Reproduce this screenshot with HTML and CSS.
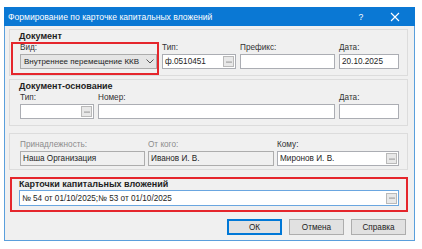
FILE: index.html
```html
<!DOCTYPE html>
<html lang="ru">
<head>
  <meta charset="UTF-8">
  <title>Формирование по карточке капитальных вложений</title>
  <link rel="stylesheet" href="styles.css">
</head>
<body>
  <div class="window">
    <div class="titlebar">
      <span class="title">Формирование по карточке капитальных вложений</span>
      <span class="tb-btn">?</span>
      <span class="tb-btn">
        <svg width="10" height="10" viewBox="0 0 10 10"><path d="M1 1L9 9M9 1L1 9" stroke="#fff" stroke-width="1.1"/></svg>
      </span>
    </div>

    <div class="content">
      <div class="panel doc">
        <div class="panel-title">Документ</div>
        <div class="row">
          <div class="field marked">
            <label>Вид:</label>
            <div class="input select">
              <span>Внутреннее перемещение ККВ</span>
              <svg class="chevron" width="8" height="5" viewBox="0 0 8 5"><path d="M0.5 0.5L4 4L7.5 0.5" fill="none" stroke="#555" stroke-width="1"/></svg>
            </div>
          </div>
          <div class="field">
            <label>Тип:</label>
            <div class="input"><span>ф.0510451</span><span class="dots"><svg width="6" height="2" viewBox="0 0 6 2"><circle cx="1" cy="1" r="0.6" fill="#333"/><circle cx="3" cy="1" r="0.6" fill="#333"/><circle cx="5" cy="1" r="0.6" fill="#333"/></svg></span></div>
          </div>
          <div class="field">
            <label>Префикс:</label>
            <div class="input"></div>
          </div>
          <div class="field">
            <label>Дата:</label>
            <div class="input"><span>20.10.2025</span></div>
          </div>
        </div>
      </div>

      <div class="panel basis">
        <div class="panel-title">Документ-основание</div>
        <div class="row">
          <div class="field">
            <label>Тип:</label>
            <div class="input"><span class="dots"><svg width="6" height="2" viewBox="0 0 6 2"><circle cx="1" cy="1" r="0.6" fill="#333"/><circle cx="3" cy="1" r="0.6" fill="#333"/><circle cx="5" cy="1" r="0.6" fill="#333"/></svg></span></div>
          </div>
          <div class="field">
            <label>Номер:</label>
            <div class="input"></div>
          </div>
          <div class="field">
            <label>Дата:</label>
            <div class="input"></div>
          </div>
        </div>
      </div>

      <div class="panel parties">
        <div class="row">
          <div class="field disabled">
            <label>Принадлежность:</label>
            <div class="input"><span>Наша Организация</span></div>
          </div>
          <div class="field disabled">
            <label>От кого:</label>
            <div class="input"><span>Иванов И. В.</span></div>
          </div>
          <div class="field">
            <label>Кому:</label>
            <div class="input"><span>Миронов И. В.</span><span class="dots"><svg width="6" height="2" viewBox="0 0 6 2"><circle cx="1" cy="1" r="0.6" fill="#333"/><circle cx="3" cy="1" r="0.6" fill="#333"/><circle cx="5" cy="1" r="0.6" fill="#333"/></svg></span></div>
          </div>
        </div>
      </div>

      <div class="panel cards">
        <div class="panel-title">Карточки капитальных вложений</div>
        <div class="input focused"><span>№ 54 от 01/10/2025;№ 53 от 01/10/2025</span><span class="dots"><svg width="6" height="2" viewBox="0 0 6 2"><circle cx="1" cy="1" r="0.6" fill="#333"/><circle cx="3" cy="1" r="0.6" fill="#333"/><circle cx="5" cy="1" r="0.6" fill="#333"/></svg></span></div>
      </div>

      <div class="buttons">
        <button class="default">ОК</button>
        <button>Отмена</button>
        <button>Справка</button>
      </div>
    </div>
  </div>
</body>
</html>
```

FILE: styles.css
```css
body {
  margin: 0;
  background: #fff;
  font-family: "Liberation Sans", Arial, sans-serif;
  font-size: 8.2px;
  color: #1e1e1e;
}
.window {
  margin: 7px 0 0 4px;
  width: 409px;
  height: 233px;
  border: 1px solid #5a9fdc;
  border-top: none;
  background: #f0f0f0;
}
.titlebar {
  height: 19px;
  margin: 0 -1px;
  background: #0a78d4;
  color: #fff;
  display: flex;
  align-items: center;
  padding: 0 3px 0 4px;
  font-size: 8.6px;
}
.title {
  flex: 1;
  white-space: nowrap;
}
.tb-btn {
  width: 34px;
  display: flex;
  justify-content: center;
  align-items: center;
}
.content {
  padding: 3px 6px 0 4px;
}
.panel {
  border: 1px solid #dcdcdc;
  padding: 1px 8px 6px 10px;
}
.panel-title {
  font-weight: bold;
  font-size: 9px;
  line-height: 11px;
  margin-left: -1px;
}
.basis {
  margin-top: 3px;
}
.parties {
  margin-top: 7px;
  padding-top: 5px;
  padding-bottom: 3px;
}
.cards {
  margin: 7px 0 0 1px;
  border: 2px solid #e5262c;
  padding: 0 7px 4px 7px;
}
.cards .panel-title {
  line-height: 10px;
  margin-left: 0;
}
.row {
  display: grid;
  column-gap: 4px;
}
.doc .row {
  grid-template-columns: 138px 74px 95px 60px;
}
.basis .row {
  grid-template-columns: 74px 237px 60px;
}
.parties .row {
  grid-template-columns: 125px 126px 122px;
  column-gap: 3px;
}
label {
  display: block;
  height: 11px;
  line-height: 11px;
  color: #333;
}
.input {
  box-sizing: border-box;
  height: 15px;
  margin-top: 1px;
  border: 1px solid #abadb3;
  background: #fff;
  display: flex;
  align-items: center;
  padding: 0 1px 0 2px;
  white-space: nowrap;
  overflow: hidden;
}
.dots {
  margin-left: auto;
  width: 9px;
  height: 9px;
  border: 1px solid #b9b9b9;
  background: #e8e8e8;
  display: flex;
  align-items: center;
  justify-content: center;
}
.select {
  width: 137px;
  background: #e5e5e5;
  border-color: #acacac;
  padding-left: 3px;
  font-size: 8px;
}
.chevron {
  margin-left: auto;
  margin-right: 1px;
}
.marked {
  position: relative;
}
.marked::after {
  content: "";
  position: absolute;
  left: -9px;
  right: -1px;
  top: 0;
  bottom: -6px;
  border: 2px solid #e5262c;
}
.disabled label {
  color: #8c8c8c;
}
.disabled .input {
  background: #f0f0f0;
  border-color: #adadad;
}
.cards .input {
  height: 16px;
}
.focused {
  border-color: #6aa6e0;
}
.buttons {
  display: flex;
  justify-content: flex-end;
  gap: 7px;
  margin-top: 7px;
  padding-right: 2px;
}
button {
  width: 55px;
  height: 16px;
  padding: 0;
  border: 1px solid #adadad;
  background: #e1e1e1;
  font-family: "Liberation Sans", Arial, sans-serif;
  font-size: 8.2px;
  color: #1e1e1e;
}
button.default {
  border-color: #0078d7;
  box-shadow: inset 0 0 0 1px #0078d7;
}
```
